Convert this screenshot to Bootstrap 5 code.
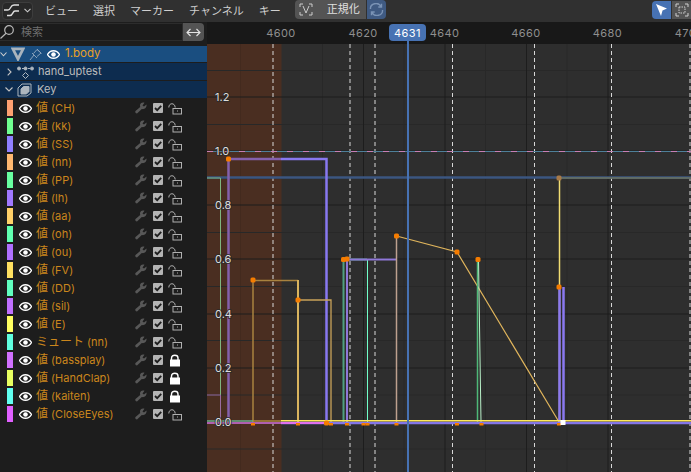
<!DOCTYPE html>
<html lang="ja">
<head>
    <meta charset="UTF-8">
    <meta name="viewport" content="width=device-width, initial-scale=1.0">
    <title>グラフエディター</title>
    <link href="https://cdn.jsdelivr.net/npm/bootstrap@5.3.0/dist/css/bootstrap.min.css" rel="stylesheet">
    <style>
        html, body { height: 100%; }
        body { background: #1d1d1d; overflow: hidden; font: 11px/1 Inter, "Noto Sans CJK JP", sans-serif; color: #c4c4c4; }
        .app { width: 691px; height: 472px; }
        .topbar { height: 22px; background: #303030; }
        .editor-btn { width: 31px; height: 18px; margin-left: 2px; margin-top: -1px; background: #282828; border: 1px solid #3d3d3d; border-radius: 4px; }
        .menu-group { gap: 15px; margin-left: 12px; margin-right: 14px; }
        .menu-item { font-size: 11px; color: #cfcfcf; white-space: nowrap; }
        .norm-btn { width: 71px; height: 19px; margin-top: -3px; background: #545454; border-radius: 4px 0 0 4px; font-size: 11px; color: #e0e0e0; }
        .norm-text { margin-left: 10px; }
        .sync-btn { width: 19px; height: 19px; margin-top: -3px; margin-left: 1px; background: #3f5a82; border-radius: 0 4px 4px 0; }
        .tool-btn { width: 19px; height: 18px; margin-top: -3px; }
        .tool-on { background: #4772b3; border-radius: 4px 0 0 4px; }
        .tool-off { background: #545454; margin-left: 1px; }
        .side { width: 207px; height: 450px; background: #1d1d1d; }
        .search-row { height: 24px; padding: 1px 3px 5px 0; }
        .search-box { width: 183px; background: #1b1b1b; border: 1px solid #2c2c2c; border-left: 0; color: #6f6f6f; font-size: 11px; gap: 7px; }
        .swap-btn { width: 21px; background: #545454; border-radius: 0 4px 4px 0; }
        .tree-row { height: 17px; margin-bottom: 1px; }
        .row-sel { height: 16px; background: #1a4e80; }
        .row-sub { background: #0d2c4f; }
        .row-hand { padding-left: 7px; }
        .row-key { padding-left: 5px; }
        .icon-hand { margin-left: 5px; }
        .icon-key { margin-left: 4px; }
        .name-active { color: #e9a125; font-size: 11.5px; margin-left: 5px; }
        .name-sub { color: #bdbdbd; font-size: 11px; margin-left: 4px; }
        .row-key .name-sub { margin-left: 5px; }
        .chan-row { height: 18px; padding-left: 7px; }
        .swatch { width: 6px; height: 16px; margin-right: 6px; }
        .chan-name { color: #cb861c; font-size: 11px; width: 99px; margin-left: 4px; white-space: nowrap; }
        .chan-name b { font-weight: 400; font-size: 12px; }
        .chk { width: 10px; height: 10px; margin: 0 5px 0 6px; background: #b4b4b4; border-radius: 1px; }
        .graph { width: 484px; height: 450px; background: #2e2e2e; }
        .graph svg { display: block; }
        .axis-label { font: 11px Inter, sans-serif; fill: #dcdcdc; paint-order: stroke; stroke: #2a2a2acc; stroke-width: 2px; }
        .ruler-label { font: 11px Inter, sans-serif; fill: #8f8f8f; letter-spacing: .4px; }
        .head-label { font: 11px Inter, sans-serif; fill: #fff; letter-spacing: .4px; }
    </style>
</head>
<body>
    <div class="app">
        <div class="topbar d-flex align-items-center">
            <div class="editor-btn d-flex align-items-center justify-content-center gap-1">
                <svg width="16" height="13" viewBox="0 0 16 13" fill="none" stroke="#ddd" stroke-width="1.4"><path d="M0 6H4C7 6 6 1 10 1H15M3 11.500H6C9 11.500 8.500 7 11 7H15"/></svg>
                <svg width="7" height="5" viewBox="0 0 7 5" fill="none" stroke="#ccc" stroke-width="1.1"><path d="M.5 .8 3.5 3.8 6.5 .8"/></svg>
            </div>
            <div class="menu-group d-flex">
                <span class="menu-item">ビュー</span>
                <span class="menu-item">選択</span>
                <span class="menu-item">マーカー</span>
                <span class="menu-item">チャンネル</span>
                <span class="menu-item">キー</span>
            </div>
            <div class="norm-btn d-flex align-items-center">
                <svg class="mx-1" width="14" height="13" viewBox="0 0 14 13" fill="none" stroke="#ccc"><path d="M1 4V1H4M10 1H13V4M13 9V12H10M4 12H1V9M4 3 7 10 10 3"/></svg>
                <span class="norm-text">正規化</span>
            </div>
            <div class="sync-btn d-flex align-items-center justify-content-center">
                <svg width="15" height="13" viewBox="0 0 15 13" fill="none" stroke="#7a93b5" stroke-width="1.4"><path d="M1.5 6A5.5 5 0 0 1 12 3.5M13.500 7A5.500 5 0 0 1 3 9.500M12.500 .8V4H9.300M2.500 12.200V9H5.700"/></svg>
            </div>
            <div class="tool-btn tool-on d-flex align-items-center justify-content-center ms-auto">
                <svg width="13" height="14" viewBox="0 0 13 14" fill="#fff"><path d="M1 1 12 5.500 7.500 7.500 6 13Z"/></svg>
            </div>
            <div class="tool-btn tool-off d-flex align-items-center justify-content-center">
                <svg width="14" height="14" viewBox="0 0 14 14" fill="none" stroke="#d0d0d0"><path d="M1 4V1H4M10 1H13V4M13 10V13H10M4 13H1V10"/><rect x="4" y="4" width="6" height="6" stroke-dasharray="1.500 1"/></svg>
            </div>
        </div>
        <div class="d-flex">
            <div class="side">
                <div class="search-row d-flex">
                    <div class="search-box d-flex align-items-center">
                        <svg width="14" height="14" viewBox="0 0 14 14" fill="none" stroke="#b8b8b8" stroke-width="1.200"><circle cx="9" cy="5" r="4.300"/><path d="M6 8.200 .5 13.500"/></svg>
                        <span>検索</span>
                    </div>
                    <div class="swap-btn d-flex align-items-center justify-content-center">
                        <svg width="15" height="9" viewBox="0 0 15 9" fill="none" stroke="#e4e4e4" stroke-width="1.100"><path d="M1 4.500H14M4.500 1 1 4.500 4.500 8M10.500 1 14 4.500 10.500 8"/></svg>
                    </div>
                </div>
                <div class="tree-row row-sel d-flex align-items-center">
                    <svg width="7" height="5" viewBox="0 0 7 5" fill="none" stroke="#d0d0d0" stroke-width="1.100"><path d="M.5 .5 3.500 3.800 6.500 .5"/></svg>
                    <svg class="ms-1" width="14" height="14" viewBox="0 0 14 14" fill="none" stroke="#a9b4bd" stroke-width="2.800"><path d="M1.800 1.800H12.200L7 12Z"/></svg>
                    <svg class="ms-1" width="14" height="14" viewBox="0 0 14 14" fill="none" stroke="#8aa2bb"><path d="M1 13 5 8M3 6 8 11M4.500 6.500 8 2.500 12 6 8 9.500M8 2 12.500 6.500"/></svg>
                    <svg class="ms-1" width="13" height="9" viewBox="0 0 13 9"><path d="M.5 4.500C3.500 -.5 9.500 -.5 12.500 4.500C9.500 9.500 3.500 9.500 .5 4.500Z" fill="none" stroke="#fff" stroke-width="1.300"/><circle cx="6.500" cy="4.500" r="2.300" fill="#fff"/></svg>
                    <span class="name-active">1.body</span>
                </div>
                <div class="tree-row row-sub row-hand d-flex align-items-center">
                    <svg width="5" height="8" viewBox="0 0 5 8" fill="none" stroke="#c4c4c4" stroke-width="1.100"><path d="M.7 .7 4 4 .7 7.300"/></svg>
                    <svg class="icon-hand" width="17" height="14" viewBox="0 0 17 14" fill="none" stroke="#aeb7bf"><path d="M2 3.500H15" stroke-dasharray="2 1"/><circle cx="2" cy="3.500" r="1.500" fill="#aeb7bf"/><circle cx="8.500" cy="3.500" r="1.500" fill="#aeb7bf"/><circle cx="15" cy="3.500" r="1.500" fill="#aeb7bf"/><path d="M8.500 7.500 11.500 10.500 8.500 13.500 5.500 10.500Z"/></svg>
                    <span class="name-sub">hand_uptest</span>
                </div>
                <div class="tree-row row-sub row-key d-flex align-items-center">
                    <svg width="8" height="5" viewBox="0 0 8 5" fill="none" stroke="#c4c4c4" stroke-width="1.100"><path d="M.5 .5 4 4 7.500 .5"/></svg>
                    <svg class="icon-key" width="15" height="14" viewBox="0 0 15 14" fill="none" stroke="#aeb7bf"><path d="M1 5 5 1H14V10L10 13H1Z"/><path d="M4 6 6.500 3.500H12V8.500L9.500 11H4Z" fill="#aeb7bf"/></svg>
                    <span class="name-sub">Key</span>
                </div>
                <div id="channels"></div>
            </div>
            <div class="graph"><svg id="plot" width="484" height="450" viewBox="207 22 484 450"></svg></div>
        </div>
    </div>

    <script src="https://cdn.jsdelivr.net/npm/bootstrap@5.3.0/dist/js/bootstrap.bundle.min.js"></script>
    <script>
        // チャンネル一覧
        const channels = [
            ['値', 'CH', '#ffa070', 0], ['値', 'kk', '#70ff90', 0], ['値', 'SS', '#9080ff', 0],
            ['値', 'nn', '#ffb870', 0], ['値', 'PP', '#68ffa0', 0], ['値', 'lh', '#a078ff', 0],
            ['値', 'aa', '#ffd068', 0], ['値', 'oh', '#60ffb0', 0], ['値', 'ou', '#b070ff', 0],
            ['値', 'FV', '#ffe060', 0], ['値', 'DD', '#60ffc0', 0], ['値', 'sil', '#c070ff', 0],
            ['値', 'E', '#ffff60', 0], ['ミュート', 'nn', '#60ffe0', 0], ['値', 'bassplay', '#d070ff', 1],
            ['値', 'HandClap', '#e8ff60', 1], ['値', 'kaiten', '#60fff0', 1], ['値', 'CloseEyes', '#e060ff', 0]
        ];
        const eye = '<svg width="13" height="9" viewBox="0 0 13 9"><path d="M.5 4.500C3.500 -.5 9.500 -.5 12.500 4.500C9.500 9.500 3.500 9.500 .5 4.500Z" fill="none" stroke="#fff" stroke-width="1.300"/><circle cx="6.500" cy="4.500" r="2.300" fill="#fff"/></svg>';
        const wrench = '<svg width="12" height="12" viewBox="0 0 12 12" fill="#585858"><path d="M11.500 2.500 9 4.500 7.500 3.500 9.500 .8C7.500 -.2 5 1 5 3.500L5.200 5 .5 9C-.2 10 .5 11.500 2 11.500L6.800 7C9.500 7.800 12 5.500 11.500 2.500Z"/></svg>';
        const check = '<svg class="d-block" width="10" height="10" viewBox="0 0 10 10" fill="none" stroke="#1d1d1d" stroke-width="1.800"><path d="M2 5 4.200 7.200 8.200 2.800"/></svg>';
        const lockOpen = '<svg width="14" height="13" viewBox="0 0 14 13" fill="none" stroke="#b0b0b0"><path d="M.8 5.500C.8 .5 7 .5 7.200 5.500"/><rect x="5" y="6.500" width="8.500" height="5.500"/><path d="M9 9H10"/></svg>';
        const lockShut = '<svg width="14" height="13" viewBox="0 0 14 13"><path d="M3.500 6V4C3.500 .3 10 .3 10 4V6" fill="none" stroke="#fff" stroke-width="1.400"/><rect x="2" y="5.500" width="10" height="7" fill="#fff"/></svg>';

        document.getElementById('channels').innerHTML = channels.map(c => `
            <div class="chan-row d-flex align-items-center">
                <div class="swatch" style="background:${c[2]}"></div>
                ${eye}
                <div class="chan-name"><b>${c[0]}</b> (${c[1]})</div>
                ${wrench}
                <div class="chk">${check}</div>
                ${c[3] ? lockShut : lockOpen}
            </div>`).join('');

        // グラフ描画
        const seg = (x1, y1, x2, y2, color, w, extra) => `<line x1="${x1}" y1="${y1}" x2="${x2}" y2="${y2}" stroke="${color}" stroke-width="${w}" ${extra || ''}/>`;
        const poly = (pts, color, w) => `<polyline points="${pts}" fill="none" stroke="${color}" stroke-width="${w}"/>`;
        const dot = (x, y, r) => `<rect x="${x - r}" y="${y - r}" width="${2 * r}" height="${2 * r}" rx="1.500" fill="#f57c00"/>`;
        let s = '';

        // プレビュー範囲
        s += '<rect x="207" y="44" width="74.500" height="428" fill="#4a2e21"/>';

        // グリッド
        [322.500, 404, 485.500, 567].forEach(x => s += seg(x, 44, x, 472, '#282828', 1));
        s += seg(240.500, 44, 240.500, 472, '#432a1e', 1);
        [70.500, 124.500, 178.500, 232.500, 286.500, 340.500, 395, 449].forEach(y => s += seg(207, y, 691, y, '#282828', 1));
        [97, 151, 205, 259, 314, 368, 422].forEach(y => s += seg(207, y, 691, y, '#1d1d1d', 1));
        [363.500, 445, 526.500, 608].forEach(x => s += seg(x, 44, x, 472, '#1d1d1d', 1));

        // マーカーの破線
        [273, 350, 375, 452.500, 534.500, 611.500, 690].forEach(x => s += seg(x, 44, x, 472, '#d8d8d8', 1, 'stroke-dasharray="4 3"'));

        // 水平の基準線
        s += seg(207, 151.500, 691, 151.500, '#4d7f99', 1);
        s += seg(207, 151.500, 691, 151.500, '#c77fb5', 1, 'stroke-dasharray="6 10"');
        s += seg(207, 177.500, 691, 177.500, '#3b5680', 2.500);
        s += seg(559, 178, 691, 178, '#6c7560', 1.500);

        // カーブ(プレビュー範囲内は暗め)
        s += poly('207,178 220.500,178 220.500,422', '#7fb67f', 1);
        s += poly('207,395 220.500,395 220.500,422', '#9a6ca0', 1);
        s += poly('228.500,422 228.500,159 281,159', '#8460ac', 2.500);
        s += poly('281,159 326.500,159 326.500,422', '#8878f0', 2.500);
        s += poly('253,422 253,280.500 298,280.500', '#a9833f', 1.500);
        s += seg(298, 280, 298, 422, '#d9b45e', 2);
        s += poly('298,300 331,300 331,422', '#c9a35a', 1.300);
        s += poly('343.500,422 343.500,259.500 367,259.500', '#4fa080', 2);
        s += seg(367.500, 259.500, 367.500, 422, '#70ffc8', 1);
        s += poly('347,422 347,259.500 396,259.500', '#8f78d8', 2);
        s += poly('396.500,422 396.500,236', '#bda08f', 1.500);
        s += poly('396.500,236 457,252 559,422', '#e0b55c', 1.200);
        s += seg(477.500, 259, 477.500, 422, '#4fb878', 1.500);
        s += seg(478.500, 259, 481, 422, '#b8f0c8', 1);
        s += seg(559.500, 178, 559.500, 422, '#f2de72', 1.500);
        s += seg(559.500, 287, 559.500, 422, '#8a78f0', 2.500);
        s += seg(563.500, 287, 563.500, 422, '#8a78f0', 2.500);

        // y=0 の線
        s += seg(207, 421, 253, 421, '#6fb08a', 1.500);
        s += seg(207, 423, 281, 423, '#b05fb0', 2);
        s += seg(253, 421, 281, 421, '#b08a3c', 1.500);
        s += seg(281, 423, 691, 423, '#8476ea', 2.500);
        s += seg(281, 423, 326, 423, '#e070f0', 2);
        s += seg(281, 420.800, 691, 420.800, '#ffe95c', 1.500);

        // キーフレーム
        [[228.500, 159], [253, 280], [298, 300], [343.500, 259.500], [347, 259], [396.500, 236], [457, 252], [478, 259.500], [559, 287]]
            .forEach(p => s += dot(p[0], p[1], 2.500));
        s += '<rect x="556.500" y="175.500" width="5" height="5" rx="1.500" fill="#a87a48"/>';
        [253, 298, 331, 347, 363.500, 367.500, 396.500, 457, 481.500, 559].forEach(x => s += `<rect x="${x - 2}" y="423" width="4" height="2.500" fill="#f57c00"/>`);
        s += dot(326.500, 423, 2.500);
        s += '<rect x="560.500" y="420" width="5" height="5" fill="#fff"/>';

        // 軸の数値
        [['1.2', 101], ['1.0', 155], ['0.8', 209], ['0.6', 263], ['0.4', 318], ['0.2', 372], ['0.0', 426]]
            .forEach(l => s += `<text class="axis-label" x="215" y="${l[1]}">${l[0]}</text>`);

        // ルーラー
        s += '<rect x="207" y="22" width="484" height="22" fill="#181818"/>';
        [['4600', 281], ['4620', 363], ['4640', 444.500], ['4660', 526], ['4680', 607.500], ['4700', 689]]
            .forEach(l => s += `<text class="ruler-label" x="${l[1]}" y="37" text-anchor="middle">${l[0]}</text>`);

        // 再生ヘッド
        s += seg(408, 40, 408, 472, '#4772b3', 2);
        s += '<rect x="389" y="24" width="37" height="17" rx="4" fill="#4772b3"/>';
        s += '<text class="head-label" x="407.500" y="36.500" text-anchor="middle">4631</text>';

        document.getElementById('plot').innerHTML = s;
    </script>
</body>
</html>
